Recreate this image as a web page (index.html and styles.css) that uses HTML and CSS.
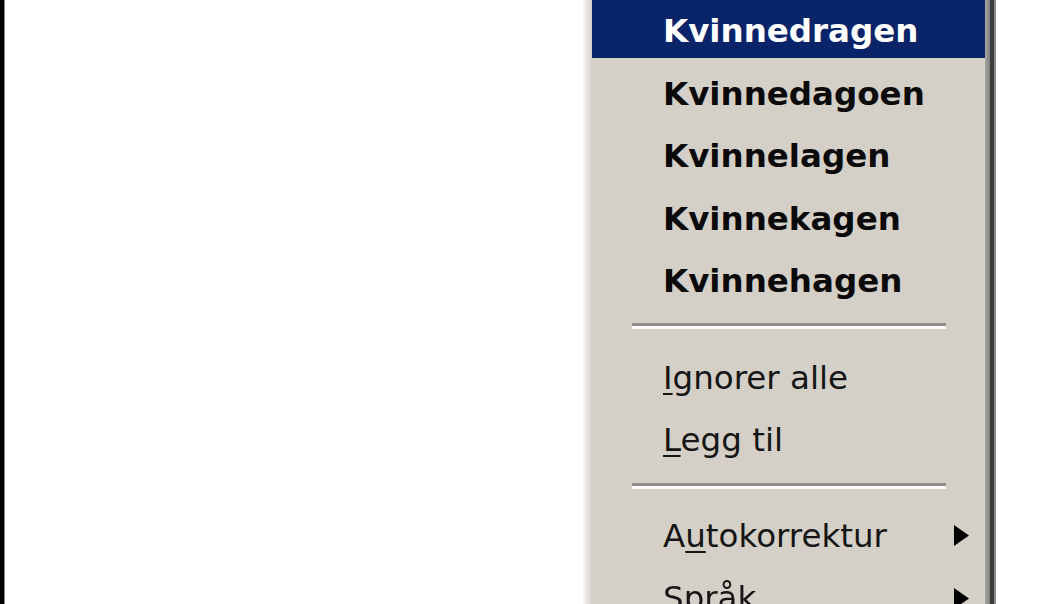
FILE: index.html
```html
<!DOCTYPE html>
<html lang="no">
<head>
<meta charset="utf-8">
<title>Stavekontroll</title>
<link rel="stylesheet" href="styles.css">
</head>
<body>
<div class="screen">
  <div class="edge"></div>
  <div class="doc"></div>
  <div class="menu">
    <div class="item bold sel">Kvinnedragen</div>
    <div class="item bold">Kvinnedagoen</div>
    <div class="item bold">Kvinnelagen</div>
    <div class="item bold">Kvinnekagen</div>
    <div class="item bold">Kvinnehagen</div>
    <div class="sep sep-a"></div>
    <div class="item"><span><u>I</u>gnorer alle</span></div>
    <div class="item"><span><u>L</u>egg til</span></div>
    <div class="sep sep-b"></div>
    <div class="item"><span>A<u>u</u>tokorrektur</span><svg class="arrow" viewBox="0 0 17 23" width="17" height="23"><polygon points="1,1 16,11.5 1,22" fill="#000"/></svg></div>
    <div class="item"><span>Språk</span><svg class="arrow" viewBox="0 0 17 23" width="17" height="23"><polygon points="1,1 16,11.5 1,22" fill="#000"/></svg></div>
  </div>
  <div class="right"></div>
</div>
</body>
</html>
```

FILE: styles.css
```css
html, body {
  margin: 0;
  padding: 0;
  background: #fff;
}

.screen {
  display: flex;
  width: 1058px;
  height: 604px;
  overflow: hidden;
  background: #fff;
}

.edge {
  flex: none;
  width: 4px;
  background: #000;
  border-right: 1px solid #8a8a8a;
}

.doc {
  flex: 1;
  background: #fff;
}

.menu {
  flex: none;
  width: 414px;
  box-sizing: border-box;
  padding: 0 11px 0 10px;
  background: linear-gradient(to right,
    #fdfdfc 0,
    #e6e4de 5px,
    #d4d0c8 10px,
    #d4d0c8 calc(100% - 11px),
    #a8a6a2 calc(100% - 11px),
    #7e7e7c calc(100% - 6px),
    #3c3c3c calc(100% - 6px),
    #3c3c3c calc(100% - 2px),
    #8a8a8a calc(100% - 2px));
  font-family: "DejaVu Sans", Verdana, sans-serif;
  font-size: 32.5px;
  color: #151515;
  filter: blur(0.7px);
}

.item {
  display: flex;
  align-items: center;
  justify-content: space-between;
  height: 62.5px;
  line-height: 62.5px;
  padding: 0 15px 0 71px;
  white-space: nowrap;
}

.item.bold {
  font-weight: bold;
  color: #0a0a0a;
}

.item.sel {
  background: linear-gradient(#0a246a, #0a246a) 0 0 / 100% 58px no-repeat;
  color: #fff;
}

.item u {
  text-decoration-thickness: 2px;
  text-underline-offset: 4px;
}

.arrow {
  flex: none;
  display: block;
}

.sep {
  box-sizing: border-box;
}

.sep-a {
  height: 34px;
  padding-top: 10px;
}

.sep-b {
  height: 33px;
  padding-top: 11.5px;
}

.sep::before {
  content: "";
  display: block;
  margin: 0 39px 0 40px;
  border-top: 3px solid #8e8c88;
  border-bottom: 3px solid #fbfbfa;
}

.right {
  flex: none;
  width: 62px;
  background: #fff;
}
```
